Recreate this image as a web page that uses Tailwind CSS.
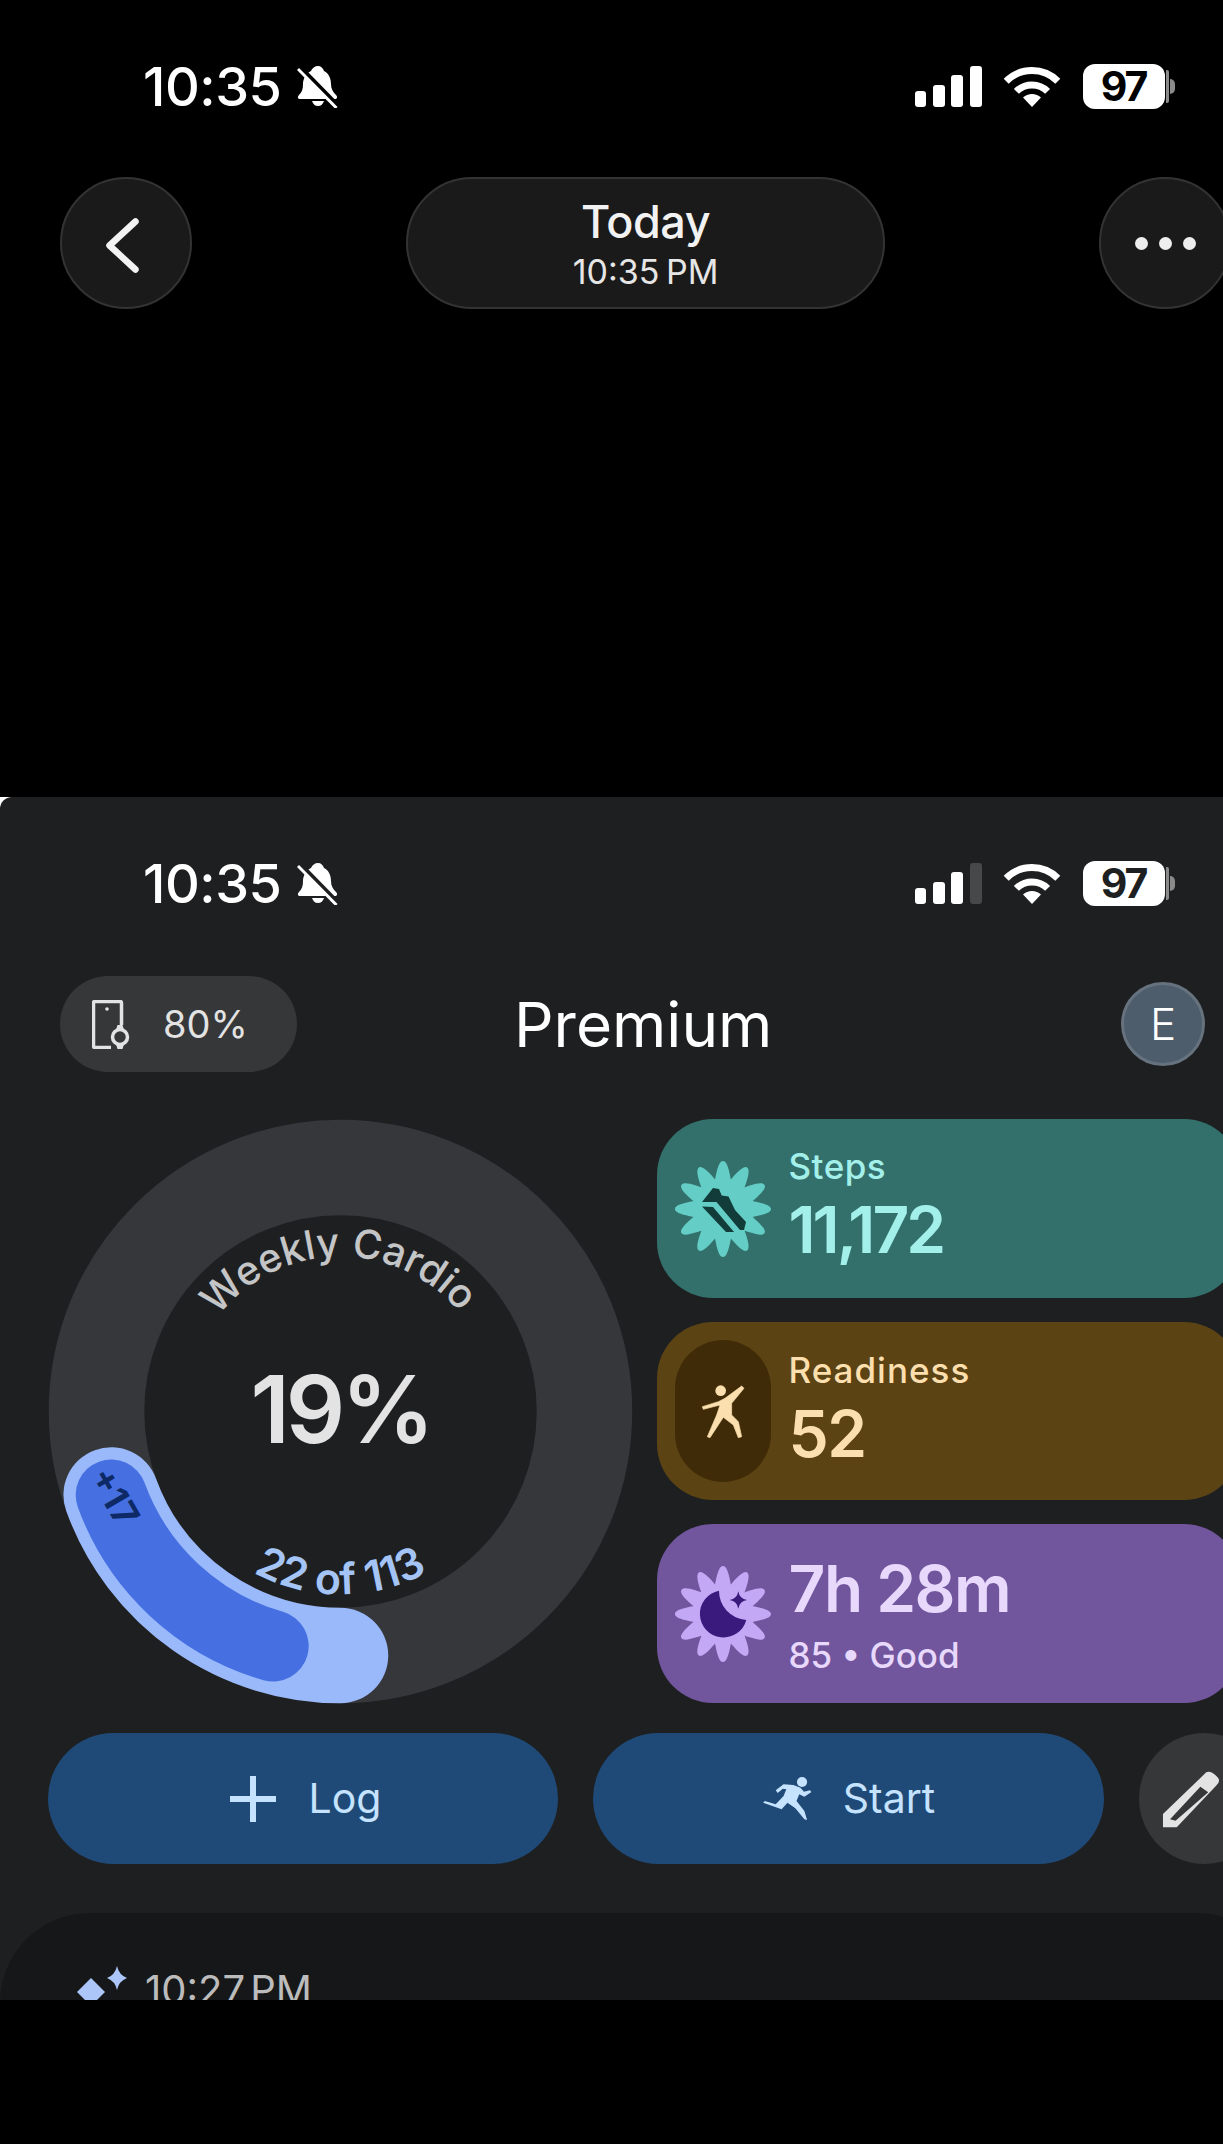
<!DOCTYPE html>
<html lang="en">

<head>
    <meta charset="UTF-8">
    <meta name="viewport" content="width=device-width, initial-scale=1.0">
    <title>Fitness :: Today</title>
    <script src="https://cdn.jsdelivr.net/npm/@tailwindcss/browser@4"></script>
</head>

<body class="bg-black">
    <svg width="0" height="0" class="absolute">
        <defs>
            <path id="petal" d="M-9 -24C-7 -34 -5 -48 0 -48C5 -48 7 -34 9 -24Z" />
            <g id="badge">
                <circle r="29" />
                <use href="#petal" />
                <use href="#petal" transform="rotate(30)" />
                <use href="#petal" transform="rotate(60)" />
                <use href="#petal" transform="rotate(90)" />
                <use href="#petal" transform="rotate(120)" />
                <use href="#petal" transform="rotate(150)" />
                <use href="#petal" transform="rotate(180)" />
                <use href="#petal" transform="rotate(210)" />
                <use href="#petal" transform="rotate(240)" />
                <use href="#petal" transform="rotate(270)" />
                <use href="#petal" transform="rotate(300)" />
                <use href="#petal" transform="rotate(330)" />
            </g>
            <g id="wifi" fill="none" stroke="#fff" stroke-width="7">
                <path d="M3.200 16.200A36.500 36.500 0 0 1 54.800 16.200" />
                <path d="M13.400 26.400A22 22 0 0 1 44.600 26.400" />
                <path d="M29 42L20 32.500A13 13 0 0 1 38 32.500Z" fill="#fff" stroke="none" />
            </g>
            <g id="bell" fill="#fff">
                <path d="M21 1c3 0 5 2 6 5 5 2 7 8 7 13 0 5 2 8 5 11 2 2 1 4-1 4H3c-2 0-3-2-1-4 3-3 4-6 4-11 0-5 3-11 8-13 1-3 4-5 7-5Z" />
                <path d="M15 36h12c-1 3-3 5-6 5s-5-2-6-5Z" />
            </g>
        </defs>
    </svg>

    <div class="w-[1223px] h-[2144px] overflow-hidden bg-black font-[Inter,sans-serif]">

        <!-- today header -->
        <div class="h-[797px] pt-[64px]">
            <div class="flex h-[45px] text-white">
                <span class="ml-[143px] w-[144px] text-[54px] leading-[45px] font-medium tracking-[-0.5px]">10:35</span>
                <svg class="ml-[10px] mt-[1px]" width="42" height="43" viewBox="0 0 42 43">
                    <use href="#bell" />
                    <path d="M3 2L41 41" stroke="#000" stroke-width="4.500" />
                    <path d="M1 4L39.500 43" stroke="#fff" stroke-width="3" />
                </svg>
                <div class="ml-[576px] mt-[2px] flex h-[41px] items-end gap-[6.500px]">
                    <div class="w-[11px] h-[16px] rounded-[3px] bg-white"></div>
                    <div class="w-[12px] h-[22px] rounded-[3px] bg-white"></div>
                    <div class="w-[12px] h-[32px] rounded-[3px] bg-white"></div>
                    <div class="w-[12px] h-[41px] rounded-[3px] bg-white"></div>
                </div>
                <svg class="ml-[21px] mt-[1px]" width="58" height="43" viewBox="0 0 58 43"><use href="#wifi" /></svg>
                <div class="ml-[22px] flex items-center">
                    <div class="w-[82px] h-[45px] rounded-[12px] bg-white text-black text-[41px] font-bold tracking-[-2px] leading-[45px] text-center">97</div>
                    <div class="ml-[1px] w-[3px] h-[33px] rounded-r-[2px] bg-[#8a8a8a]"></div>
                    <div class="ml-[1.500px] w-[5px] h-[15px] rounded-r-full bg-[#8a8a8a]"></div>
                </div>
            </div>

            <div class="mt-[68px] flex pl-[60px]">
                <div class="flex w-[132px] h-[132px] shrink-0 items-center justify-center rounded-full border-2 border-[#333] bg-[#1a1a1a]">
                    <svg class="-ml-[8px] mt-[4px]" width="33" height="55" viewBox="0 0 33 55" fill="none" stroke="#f2f2f2" stroke-width="6.500" stroke-linecap="round" stroke-linejoin="round">
                        <path d="M29.500 3.500L3.500 27.500L29.500 51.500" />
                    </svg>
                </div>
                <div class="ml-[214px] flex w-[479px] h-[132px] shrink-0 flex-col items-center justify-center rounded-full border-2 border-[#333] bg-[#1a1a1a]">
                    <span class="text-[45px] leading-[50px] font-medium text-[#f2f2f2] tracking-[-0.5px]">Today</span>
                    <span class="mt-[7px] text-[34px] leading-[36px] text-[#e6e6e6] [word-spacing:-3px]">10:35 PM</span>
                </div>
                <div class="ml-[214px] flex w-[132px] h-[132px] shrink-0 items-center justify-center gap-[11px] rounded-full border-2 border-[#333] bg-[#1a1a1a]">
                    <span class="w-[13px] h-[13px] rounded-full bg-[#eee]"></span>
                    <span class="w-[13px] h-[13px] rounded-full bg-[#eee]"></span>
                    <span class="w-[13px] h-[13px] rounded-full bg-[#eee]"></span>
                </div>
            </div>
        </div>

        <!-- premium screen -->
        <div class="h-[1203px] overflow-hidden bg-white">
            <div class="h-[1203px] rounded-tl-[12px] bg-[#1e1f21] pt-[64px]">
                <div class="flex h-[45px] text-white">
                    <span class="ml-[143px] w-[144px] text-[54px] leading-[45px] font-medium tracking-[-0.5px]">10:35</span>
                    <svg class="ml-[10px] mt-[1px]" width="42" height="43" viewBox="0 0 42 43">
                        <use href="#bell" />
                        <path d="M3 2L41 41" stroke="#1e1f21" stroke-width="4.500" />
                        <path d="M1 4L39.500 43" stroke="#fff" stroke-width="3" />
                    </svg>
                    <div class="ml-[576px] mt-[2px] flex h-[41px] items-end gap-[6.500px]">
                        <div class="w-[11px] h-[16px] rounded-[3px] bg-white"></div>
                        <div class="w-[12px] h-[22px] rounded-[3px] bg-white"></div>
                        <div class="w-[12px] h-[32px] rounded-[3px] bg-white"></div>
                        <div class="w-[12px] h-[41px] rounded-[3px] bg-[#47484a]"></div>
                    </div>
                    <svg class="ml-[21px] mt-[1px]" width="58" height="43" viewBox="0 0 58 43"><use href="#wifi" /></svg>
                    <div class="ml-[22px] flex items-center">
                        <div class="w-[82px] h-[45px] rounded-[12px] bg-white text-[#1e1f21] text-[41px] font-bold tracking-[-2px] leading-[45px] text-center">97</div>
                        <div class="ml-[1px] w-[3px] h-[33px] rounded-r-[2px] bg-[#8a8a8a]"></div>
                        <div class="ml-[1.500px] w-[5px] h-[15px] rounded-r-full bg-[#8a8a8a]"></div>
                    </div>
                </div>

                <div class="mt-[70px] flex h-[96px] items-center pl-[60px]">
                    <div class="flex w-[237px] h-[96px] items-center rounded-full bg-[#363739] pl-[32px]">
                        <svg width="38" height="49" viewBox="0 0 38 49" fill="none" stroke="#e3e3e3" stroke-width="3.500">
                            <path d="M29.500 25V3c0-.8-.7-1.500-1.500-1.500H3C2.200 1.500 1.500 2.200 1.500 3v43c0 .8.7 1.500 1.500 1.500H19" />
                            <circle cx="28" cy="37" r="7.500" />
                            <path d="M24 30l1.500-5h5l1.500 5ZM24 44l1.500 5h5l1.500-5Z" fill="#e3e3e3" stroke="none" />
                            <circle cx="15" cy="9" r="1.800" fill="#e3e3e3" stroke="none" />
                        </svg>
                        <span class="ml-[33px] text-[38px] text-[#e3e3e3]">80%</span>
                    </div>
                    <span class="ml-[217px] mt-[2px] text-[62px] leading-[96px] text-white">Premium</span>
                    <div class="ml-auto mr-[18px] flex w-[84px] h-[84px] items-center justify-center rounded-full border-[3px] border-[#66727e] bg-[#4d5d6c] text-[44px] font-light text-white">E</div>
                </div>

                <div class="mt-[47px] flex pl-[48px]">
                    <svg class="shrink-0" width="585" height="585" viewBox="0 0 585 585" fill="none">
                        <circle cx="292.500" cy="292.500" r="244" stroke="#36373a" stroke-width="95.500" />
                        <path d="M63.200 376A244 244 0 0 0 292.500 536.500" stroke="#9ab9fb" stroke-width="95.500" stroke-linecap="round" />
                        <path d="M63.200 376A244 244 0 0 0 225.200 527" stroke="#4670e2" stroke-width="71" stroke-linecap="round" />
                        <path id="arcTop" d="M137.500 292.500A155 155 0 0 1 447.500 292.500" />
                        <path id="arcBottom" d="M109.500 292.500A183 183 0 0 0 475.500 292.500" />
                        <text class="font-medium" font-size="40" fill="#c4c5c6">
                            <textPath href="#arcTop" startOffset="49.500%" text-anchor="middle">Weekly Cardio</textPath>
                        </text>
                        <text class="font-semibold" font-size="43" fill="#a4c4f5">
                            <textPath href="#arcBottom" startOffset="50%" text-anchor="middle">22 of 113</textPath>
                        </text>
                        <text class="font-semibold" x="292.500" y="324" font-size="93" fill="#e3e3e3" letter-spacing="-4" text-anchor="middle">19%</text>
                        <text class="font-bold" transform="translate(66 378) rotate(60)" y="12" font-size="36" fill="#0d2a66" text-anchor="middle">+17</text>
                    </svg>

                    <div class="ml-[23.500px] flex w-[583px] shrink-0 flex-col gap-[24px]">
                        <div class="flex h-[179px] items-center rounded-[56px] bg-[#33706c] pl-[18px]">
                            <svg class="shrink-0" width="96" height="96" viewBox="-48 -48 96 96">
                                <use href="#badge" fill="#64cec6" />
                                <path d="M-21 -7L-10 -21L-4 -20L-1.300 -13.500L5.500 -12.500L12 1L23 13L21 21L17 21L-6.500 -7Z" fill="#123c3a" />
                                <path d="M-21 -2.500L-10 -2L11 23L3 23Z" fill="#123c3a" />
                            </svg>
                            <div class="ml-[18px] mb-[8px] flex flex-col gap-[6px] text-[#a3f0ea]">
                                <span class="text-[35px] leading-[44px] font-medium tracking-[0.5px]">Steps</span>
                                <span class="text-[64px] leading-[72px] font-semibold tracking-[-3px]">11,172</span>
                            </div>
                        </div>
                        <div class="flex h-[178px] items-center rounded-[56px] bg-[#5c4314] pl-[18px]">
                            <div class="w-[96px] h-[142px] shrink-0 rounded-full bg-[#402b08]">
                                <svg width="96" height="142" viewBox="15 0 288 426">
                                    <circle cx="152" cy="152" r="16" fill="#fbdfae" />
                                    <path d="M97 200L145 185L165 175L215 138L222 145L185 190L185 225L205 245L215 290L205 293L190 255L160 232L120 293L112 290L140 225L150 195L100 208Z" fill="#fbdfae" stroke="#fbdfae" stroke-width="2" stroke-linejoin="round" />
                                </svg>
                            </div>
                            <div class="ml-[18px] mb-[4px] flex flex-col gap-[6px] text-[#fbdfae]">
                                <span class="text-[35px] leading-[44px] font-medium tracking-[1px]">Readiness</span>
                                <span class="text-[64px] leading-[72px] font-semibold tracking-[-1.500px]">52</span>
                            </div>
                        </div>
                        <div class="flex h-[179px] items-center rounded-[56px] bg-[#71569d] pl-[18px]">
                            <svg class="shrink-0" width="96" height="96" viewBox="-48 -48 96 96">
                                <use href="#badge" fill="#c3a8f6" />
                                <path d="M-4 -23.300A23.600 23.600 0 1 0 23.300 6A29 29 0 0 1 -4 -23.300Z" fill="#3b1a7e" />
                                <path d="M15.300 -22.700Q16.500 -15.200 24 -14Q16.500 -12.800 15.300 -5.300Q14.100 -12.800 6.600 -14Q14.100 -15.200 15.300 -22.700Z" fill="#3b1a7e" />
                            </svg>
                            <div class="ml-[18px] mt-[3px] flex flex-col gap-[8px] text-[#e8d8fc]">
                                <span class="text-[64px] leading-[72px] font-semibold tracking-[-1.500px]">7h 28m</span>
                                <span class="text-[35px] leading-[44px] font-medium">85 • Good</span>
                            </div>
                        </div>
                    </div>
                </div>

                <div class="mt-[29px] flex pl-[48px]">
                    <div class="flex w-[510px] h-[131px] shrink-0 items-center justify-center gap-[33px] rounded-full bg-[#1f4a77] pl-[5px] text-[41px] text-[#c5e3ff]">
                        <svg width="46" height="46" viewBox="0 0 46 46" stroke="#c5e3ff" stroke-width="6">
                            <path d="M23 0V46M0 23H46" />
                        </svg>
                        <span>Log</span>
                    </div>
                    <div class="ml-[35px] flex w-[511px] h-[131px] shrink-0 items-center justify-center gap-[30px] rounded-full bg-[#1f4a77] text-[41px] text-[#c5e3ff]">
                        <svg width="51" height="45" viewBox="390 165 130 135" preserveAspectRatio="none" fill="#c5e3ff">
                            <ellipse cx="492" cy="183" rx="13" ry="15" />
                            <path d="M425 208L445 190L470 192L488 200L497 212L512 208L516 213L498 227L485 220L478 240L498 270L505 297L498 295L475 262L455 245L440 265L393 245L397 240L425 250L445 225L452 205L443 203L430 216Z" />
                        </svg>
                        <span>Start</span>
                    </div>
                    <div class="ml-[35px] flex w-[131px] h-[131px] shrink-0 items-center rounded-full bg-[#363738] pl-[22px]">
                        <svg width="61" height="60" viewBox="1410 145 155 180" preserveAspectRatio="none">
                            <path fill-rule="evenodd" d="M1415 320L1415 280L1525 155Q1535 148 1550 165Q1565 180 1550 195L1450 320ZM1433 296L1447 300L1530 215L1510 198Z" fill="#e3e3e3" />
                        </svg>
                    </div>
                </div>

                <div class="mt-[49px] flex h-[200px] w-[1287px] rounded-t-[90px] bg-[#161719] pl-[77px] pt-[53px]">
                    <svg class="shrink-0" width="56" height="50" viewBox="0 0 56 50" fill="#adc6f9">
                        <path d="M14 12L28 26L14 40L0 26Z" />
                        <path d="M40 0Q42 9 50 12Q42 15 40 24Q38 15 30 12Q38 9 40 0Z" />
                    </svg>
                    <span class="ml-[12px] mt-[4px] text-[40px] leading-[40px] text-[#bcbcbc] [word-spacing:-6px]">10:27 PM</span>
                </div>
            </div>
        </div>
    </div>
</body>

</html>
